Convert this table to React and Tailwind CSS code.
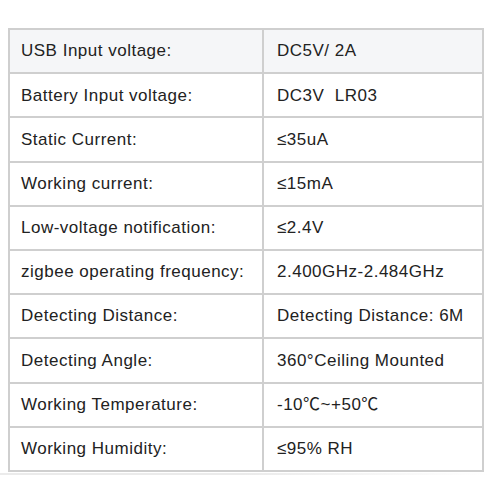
const rows = [
  ['USB Input voltage:', 'DC5V/ 2A'],
  ['Battery Input voltage:', 'DC3V\u00a0\u00a0LR03'],
  ['Static Current:', '≤35uA'],
  ['Working current:', '≤15mA'],
  ['Low-voltage notification:', '≤2.4V'],
  ['zigbee operating frequency:', '2.400GHz-2.484GHz'],
  ['Detecting Distance:', 'Detecting Distance: 6M'],
  ['Detecting Angle:', '360°Ceiling Mounted'],
  ['Working Temperature:', '-10℃~+50℃'],
  ['Working Humidity:', '≤95% RH'],
];

export default function App() {
  return (
    <div className="h-[500px] w-[495px] bg-white pt-[28px] font-['Liberation_Sans',Arial,'Noto_Sans_CJK_SC',sans-serif] text-[17px] tracking-[0.5px] text-[#222]">
      <div className="ml-[8px] w-[476px] border-2 border-[#cfcfcf]">
        {rows.map(([label, value], i) => (
          <div
            key={label}
            className={`flex items-center ${i > 0 ? 'h-[44.2px] border-t-2 border-[#cfcfcf]' : 'h-[42.2px] bg-[#f5f6f8]'}`}
          >
            <div className="flex h-full w-[254px] items-center border-r-2 border-[#cfcfcf] pl-[11px]">{label}</div>
            <div className="flex-1 pl-[13px]">{value}</div>
          </div>
        ))}
      </div>
      <div className="mt-[1px] h-[2px] w-[488px] bg-gradient-to-r from-[#ebebeb] via-[#ebebeb] to-white" />
    </div>
  );
}
